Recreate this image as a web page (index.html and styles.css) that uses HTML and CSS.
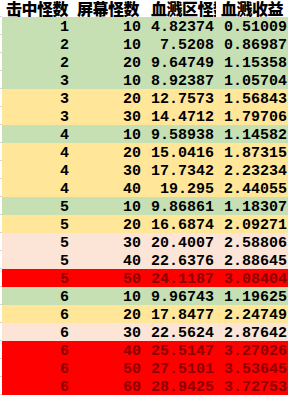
FILE: index.html
```html
<!DOCTYPE html>
<html>
<head>
<meta charset="utf-8">
<link rel="stylesheet" href="styles.css">
</head>
<body>
<div class="sheet">
  <div class="row head"><div class="gut"></div><div class="c">击中怪数</div><div class="c">屏幕怪数</div><div class="c left">血溅区怪数</div><div class="c">血溅收益</div></div>
  <div class="row g"><div class="gut"></div><div class="c">1</div><div class="c">10</div><div class="c">4.82374</div><div class="c">0.51009</div></div>
  <div class="row g"><div class="gut"></div><div class="c">2</div><div class="c">10</div><div class="c">7.5208</div><div class="c">0.86987</div></div>
  <div class="row g"><div class="gut"></div><div class="c">2</div><div class="c">20</div><div class="c">9.64749</div><div class="c">1.15358</div></div>
  <div class="row g"><div class="gut"></div><div class="c">3</div><div class="c">10</div><div class="c">8.92387</div><div class="c">1.05704</div></div>
  <div class="row y"><div class="gut"></div><div class="c">3</div><div class="c">20</div><div class="c">12.7573</div><div class="c">1.56843</div></div>
  <div class="row y"><div class="gut"></div><div class="c">3</div><div class="c">30</div><div class="c">14.4712</div><div class="c">1.79706</div></div>
  <div class="row g"><div class="gut"></div><div class="c">4</div><div class="c">10</div><div class="c">9.58938</div><div class="c">1.14582</div></div>
  <div class="row y"><div class="gut"></div><div class="c">4</div><div class="c">20</div><div class="c">15.0416</div><div class="c">1.87315</div></div>
  <div class="row y"><div class="gut"></div><div class="c">4</div><div class="c">30</div><div class="c">17.7342</div><div class="c">2.23234</div></div>
  <div class="row y"><div class="gut"></div><div class="c">4</div><div class="c">40</div><div class="c">19.295</div><div class="c">2.44055</div></div>
  <div class="row g"><div class="gut"></div><div class="c">5</div><div class="c">10</div><div class="c">9.86861</div><div class="c">1.18307</div></div>
  <div class="row y"><div class="gut"></div><div class="c">5</div><div class="c">20</div><div class="c">16.6874</div><div class="c">2.09271</div></div>
  <div class="row p"><div class="gut"></div><div class="c">5</div><div class="c">30</div><div class="c">20.4007</div><div class="c">2.58806</div></div>
  <div class="row p"><div class="gut"></div><div class="c">5</div><div class="c">40</div><div class="c">22.6376</div><div class="c">2.88645</div></div>
  <div class="row r"><div class="gut"></div><div class="c">5</div><div class="c">50</div><div class="c">24.1187</div><div class="c">3.08404</div></div>
  <div class="row g"><div class="gut"></div><div class="c">6</div><div class="c">10</div><div class="c">9.96743</div><div class="c">1.19625</div></div>
  <div class="row y"><div class="gut"></div><div class="c">6</div><div class="c">20</div><div class="c">17.8477</div><div class="c">2.24749</div></div>
  <div class="row p"><div class="gut"></div><div class="c">6</div><div class="c">30</div><div class="c">22.5624</div><div class="c">2.87642</div></div>
  <div class="row r"><div class="gut"></div><div class="c">6</div><div class="c">40</div><div class="c">25.5147</div><div class="c">3.27026</div></div>
  <div class="row r"><div class="gut"></div><div class="c">6</div><div class="c">50</div><div class="c">27.5101</div><div class="c">3.53645</div></div>
  <div class="row r"><div class="gut"></div><div class="c">6</div><div class="c">60</div><div class="c">28.9425</div><div class="c">3.72753</div></div>
</div>
</body>
</html>
```

FILE: styles.css
```css
html, body {
  margin: 0;
  padding: 0;
  background: #ffffff;
}
.sheet {
  width: 288px;
  display: flex;
  flex-direction: column;
  font-family: "Liberation Mono", "DejaVu Sans Mono", monospace;
  font-weight: bold;
  font-size: 15px;
  color: #000;
}
.row {
  display: flex;
  height: 18px;
}
.gut {
  width: 2px;
  flex: none;
  box-sizing: border-box;
  border-bottom: 1px solid #d4d4d4;
  background: #fff;
}
.c {
  width: 72px;
  flex: none;
  box-sizing: border-box;
  height: 18px;
  padding: 4px 2px 0 0;
  line-height: 14px;
  text-align: right;
  white-space: nowrap;
  overflow: hidden;
}
.row .c:nth-child(2) {
  width: 70px;
  padding-right: 3px;
}
.row .c:nth-child(3) {
  padding-right: 3px;
}
.row .c:nth-child(5) {
  padding-right: 1px;
}
.head {
  height: 17px;
  font-family: "Noto Sans CJK SC", sans-serif;
}
.head .c {
  height: 17px;
  padding: 0;
  line-height: 17px;
  font-size: 16px;
  font-weight: 900;
  letter-spacing: -0.5px;
  text-align: center;
  overflow: visible;
}
.head .c:nth-child(2),
.head .c:nth-child(3),
.head .c:nth-child(5) {
  padding: 0;
}
.head .c.left {
  text-align: left;
  padding-left: 7px;
  overflow: hidden;
}
.g .c { background: #c6e0b4; }
.y .c { background: #ffe699; }
.p .c { background: #fce4d6; }
.r .c { background: #ff0000; color: #8b0000; }
```
